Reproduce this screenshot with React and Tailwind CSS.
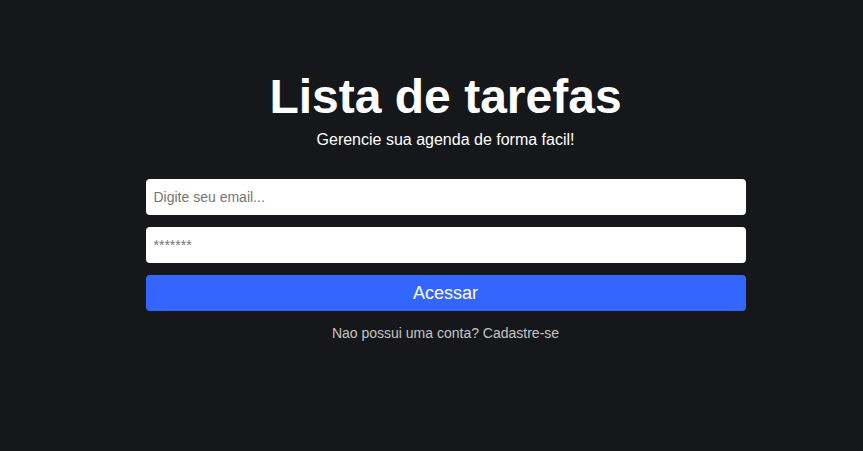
import React from "react";

const App = () => {
  return (
    <div className="flex min-h-screen w-full justify-center bg-[#16171b] pl-7 font-['Liberation_Sans',Arial,sans-serif]">
      <div className="flex w-[600px] flex-col items-center pt-[73px]">
        <h1 className="text-[48px] leading-[48px] font-bold text-white">Lista de tarefas</h1>
        <p className="mt-[7px] text-base leading-6 text-white">Gerencie sua agenda de forma facil!</p>

        <form className="mt-[27px] flex w-full flex-col gap-3" onSubmit={(e) => e.preventDefault()}>
          <input
            type="email"
            placeholder="Digite seu email..."
            className="h-9 w-full rounded-[4px] bg-white px-2 text-sm text-black outline-none placeholder:text-[#757575]"
          />
          <input
            type="password"
            placeholder="*******"
            className="h-9 w-full rounded-[4px] bg-white px-2 text-sm text-black outline-none placeholder:text-[#757575]"
          />
          <button
            type="submit"
            className="h-9 w-full rounded-[4px] bg-[#3366ff] text-lg text-white"
          >
            Acessar
          </button>
        </form>

        <a href="#" className="mt-3 text-sm leading-5 text-[#c4c4c4]">
          Nao possui uma conta? Cadastre-se
        </a>
      </div>
    </div>
  );
};

export default App;
